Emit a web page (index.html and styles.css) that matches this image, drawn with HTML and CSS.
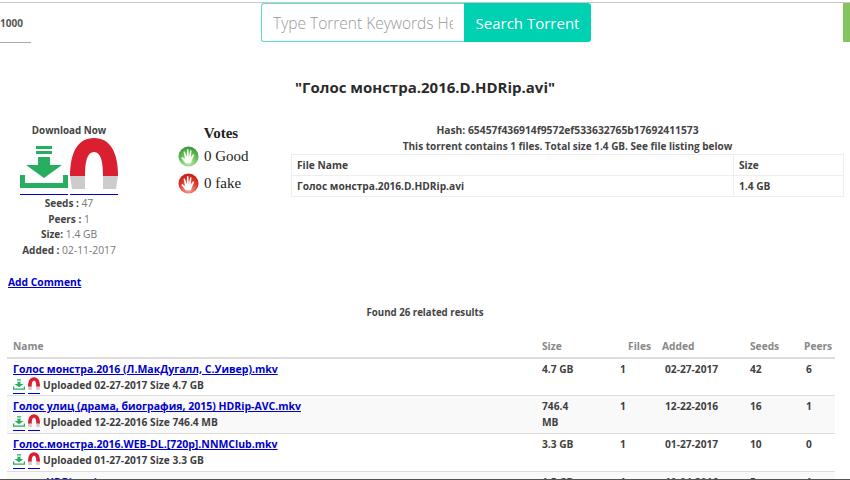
FILE: index.html
```html
<!DOCTYPE html>
<html lang="en">
<head>
<meta charset="utf-8">
<title>Голос монстра.2016.D.HDRip.avi</title>
<link rel="stylesheet" href="styles.css">
</head>
<body>
<svg width="0" height="0" class="defs">
  <defs>
    <symbol id="dl" viewBox="0 0 48 54">
      <rect x="16" y="8" width="16" height="3" fill="#27ae60"/>
      <rect x="16" y="13" width="16" height="3" fill="#27ae60"/>
      <path d="M18 19h12v8h12L24 40 6 27h12z" fill="#27ae60"/>
      <path d="M0 37h5v8h38v-8h5v13H0z" fill="#27ae60"/>
    </symbol>
    <symbol id="mg" viewBox="0 0 48 54">
      <path d="M0 38C0 14 8 0 24 0s24 14 24 38H33C33 24 31 14 24 14S15 24 15 38z" fill="#d91f30"/>
      <path d="M0 38h15v13H2zM33 38h15l-2 13H33z" fill="#ccc"/>
    </symbol>
    <radialGradient id="gg" cx=".5" cy=".8" r=".85"><stop offset="0" stop-color="#c4efb4"/><stop offset=".55" stop-color="#62bd54"/><stop offset="1" stop-color="#2f8f30"/></radialGradient>
    <radialGradient id="rg" cx=".5" cy=".8" r=".85"><stop offset="0" stop-color="#f7ad98"/><stop offset=".55" stop-color="#e2362b"/><stop offset="1" stop-color="#b81c14"/></radialGradient>
    <symbol id="hand" viewBox="0 0 22 22">
      <path d="M8 18 3.500 12.500l1-.9L7.500 14 5.800 6l1.400-.3L9.300 12l.1-8.500h1.500l.4 8.500 1.500-7.500 1.400.3-1 7.500 2.600-3.600 1.200.8L14.500 15l-1 3z" fill="#fff"/>
    </symbol>
  </defs>
</svg>
<header class="topbar">
  <div class="limit">1000</div>
  <form class="search">
    <input class="search-input" type="text" placeholder="Type Torrent Keywords Here">
    <button class="search-btn" type="button">Search Torrent</button>
  </form>
  <div class="green-tab"></div>
</header>
<h1 class="title">"Голос монстра.2016.D.HDRip.avi"</h1>
<section class="info">
  <div class="download">
    <div class="dl-head">Download Now</div>
    <div class="dl-icons">
      <a href="#"><svg class="big"><use href="#dl"/></svg></a>
      <a href="#"><svg class="big"><use href="#mg"/></svg></a>
    </div>
    <div class="stat"><b>Seeds :</b> 47</div>
    <div class="stat"><b>Peers :</b> 1</div>
    <div class="stat"><b>Size:</b> 1.4 GB</div>
    <div class="stat"><b>Added :</b> 02-11-2017</div>
  </div>
  <div class="votes">
    <div class="votes-head">Votes</div>
    <div class="vote"><svg class="ball" viewBox="0 0 22 22"><circle cx="11" cy="11" r="10.500" fill="url(#gg)"/><use href="#hand"/></svg>0 Good</div>
    <div class="vote"><svg class="ball" viewBox="0 0 22 22"><circle cx="11" cy="11" r="10.500" fill="url(#rg)"/><use href="#hand"/></svg>0 fake</div>
  </div>
  <div class="files">
    <div class="hash hash-code">Hash: 65457f436914f9572ef533632765b17692411573</div>
    <div class="hash">This torrent contains 1 files. Total size 1.4 GB. See file listing below</div>
    <table class="file-table">
      <tr><th class="fn">File Name</th><th>Size</th></tr>
      <tr><td class="fn">Голос монстра.2016.D.HDRip.avi</td><td>1.4 GB</td></tr>
    </table>
  </div>
</section>
<a class="add-comment" href="#">Add Comment</a>
<div class="found">Found 26 related results</div>
<table class="results">
  <thead>
    <tr><th class="c-name">Name</th><th class="c-size">Size</th><th class="c-files">Files</th><th class="c-added">Added</th><th class="c-seeds">Seeds</th><th class="c-peers">Peers</th></tr>
  </thead>
  <tbody>
    <tr>
      <td class="c-name"><a class="t-link" href="#">Голос монстра.2016 (Л.МакДугалл, С.Уивер).mkv</a>
        <div class="meta"><a href="#"><svg class="small"><use href="#dl"/></svg></a><a href="#"><svg class="small"><use href="#mg"/></svg></a><span>Uploaded 02-27-2017 Size 4.7 GB</span></div></td>
      <td class="n-size">4.7 GB</td><td class="n-files">1</td><td class="n-added">02-27-2017</td><td class="n-seeds">42</td><td class="n-peers">6</td>
    </tr>
    <tr class="alt">
      <td class="c-name"><a class="t-link" href="#">Голос улиц (драма, биография, 2015) HDRip-AVC.mkv</a>
        <div class="meta"><a href="#"><svg class="small"><use href="#dl"/></svg></a><a href="#"><svg class="small"><use href="#mg"/></svg></a><span>Uploaded 12-22-2016 Size 746.4 MB</span></div></td>
      <td class="n-size">746.4 MB</td><td class="n-files">1</td><td class="n-added">12-22-2016</td><td class="n-seeds">16</td><td class="n-peers">1</td>
    </tr>
    <tr>
      <td class="c-name"><a class="t-link" href="#">Голос.монстра.2016.WEB-DL.[720p].NNMClub.mkv</a>
        <div class="meta"><a href="#"><svg class="small"><use href="#dl"/></svg></a><a href="#"><svg class="small"><use href="#mg"/></svg></a><span>Uploaded 01-27-2017 Size 3.3 GB</span></div></td>
      <td class="n-size">3.3 GB</td><td class="n-files">1</td><td class="n-added">01-27-2017</td><td class="n-seeds">10</td><td class="n-peers">0</td>
    </tr>
    <tr class="alt">
      <td class="c-name"><a class="t-link" href="#">голос HDRip.avi</a></td>
      <td class="n-size">1.5 GB</td><td class="n-files">1</td><td class="n-added">10-04-2016</td><td class="n-seeds">5</td><td class="n-peers">1</td>
    </tr>
  </tbody>
</table>
<div class="edge"></div>
</body>
</html>
```

FILE: styles.css
```css
html, body { margin: 0; padding: 0; height: 480px; overflow: hidden; background: #fff; }
body { font-family: "Open Sans", sans-serif; font-size: 11px; color: #3f3f3f; box-sizing: border-box; position: relative; padding-top: 2px; }
.defs { position: absolute; }
.edge { position: absolute; left: 0; right: 0; top: 479px; height: 1px; background: #555; }
.topbar { display: flex; align-items: stretch; height: 40px; border-top: 1px solid #c8c8c8; position: relative; }
.limit { width: 31px; height: 39px; border-bottom: 1px solid #aaa; font-weight: 700; font-size: 10px; line-height: 40px; color: #555; box-sizing: content-box; }
.search { display: flex; margin-left: 230px; height: 39px; }
.search-input { width: 203px; box-sizing: border-box; height: 39px; border: 1px solid #5be0cb; border-right: 0; border-radius: 3px 0 0 3px; padding: 0 11px; font: 300 15.500px "Open Sans", sans-serif; outline: 0; }
.search-input::placeholder { color: #999; }
.search-btn { width: 127px; height: 39px; border: 0; background: #00d1b2; color: #fff; border-radius: 0 3px 3px 0; font: 400 15px "Open Sans", sans-serif; padding: 0; }
.green-tab { width: 7px; height: 39px; background: #84c45c; margin-left: auto; }
.title { margin: 34px 0 0; text-align: center; font-size: 15px; line-height: 20px; font-weight: 700; color: #2b2b2b; }
.info { display: flex; margin-top: 26px; }
.download { width: 138px; text-align: center; }
.dl-head { font-weight: 700; font-size: 9.800px; line-height: 15px; color: #444; }
.dl-icons { display: flex; justify-content: center; gap: 2px; margin-bottom: 1px; }
.dl-icons a { display: block; border-bottom: 1px solid #0000d0; height: 56px; }
.big { width: 48px; height: 54px; display: block; }
.stat { line-height: 15.700px; font-size: 10.300px; color: #777; }
.stat b { font-weight: 700; font-size: 10px; color: #444; }
.votes { width: 153px; font-family: "Liberation Serif", serif; font-size: 15px; color: #222; padding-top: 2px; }
.votes-head { font-weight: 700; text-align: center; line-height: 17px; margin-left: 13px; }
.vote { display: flex; align-items: center; margin-left: 40px; gap: 5px; height: 27px; }
.votes-head + .vote { margin-top: 1px; }
.ball { width: 21px; height: 21px; }
.files { width: 553px; text-align: center; margin-top: -1px; }
.hash { font-weight: 700; font-size: 10px; line-height: 16px; color: #444; }
.hash-code { font-size: 10.300px; }
.file-table { width: 100%; border-collapse: collapse; text-align: left; font-size: 10.200px; color: #3f3f3f; }
.file-table th, .file-table td { border: 1px solid #eee; padding: 0 5px; height: 20px; font-weight: 700; }
.fn { width: 431px; }
.add-comment { display: inline-block; margin: 17px 0 0 8px; font-weight: 700; font-size: 10.300px; color: #00c; line-height: 13px; }
.found { text-align: center; font-weight: 700; font-size: 9.700px; line-height: 14px; margin-top: 17px; color: #444; }
.results { width: 828px; margin: 16px 0 0 7px; border-collapse: collapse; table-layout: fixed; font-size: 10.200px; }
.results th { box-sizing: border-box; text-align: left; color: #888; font-weight: 700; font-size: 10.200px; height: 22px; padding: 0 6px; border-bottom: 2px solid #ddd; }
.results tbody tr { height: 38px; }
.results td { vertical-align: top; font-weight: 700; color: #3f3f3f; padding: 2px 6px 0; line-height: 16px; border-bottom: 1px solid #ddd; }
.alt td { background: #f9f9f9; }
.t-link { color: #00c; font-weight: 700; font-size: 10.500px; }
.meta { display: flex; align-items: flex-start; height: 18px; }
.meta a { display: block; border-bottom: 1px solid #0000d0; height: 16px; margin-right: 3px; }
.meta span { line-height: 17px; }
.small { width: 12px; height: 14px; display: block; }
.c-name { width: 529px; }
.c-size { width: 78px; }
.c-files { width: 42px; }
.results th.c-files { text-align: right; padding-right: 5px; }
.c-added { width: 88px; }
.c-seeds { width: 54px; }
.c-peers { width: 37px; }
.results td.n-size { padding-right: 30px; }
.results td.n-added { padding-left: 9px; padding-right: 0; }
.results td.n-peers { padding-left: 8px; }
```
